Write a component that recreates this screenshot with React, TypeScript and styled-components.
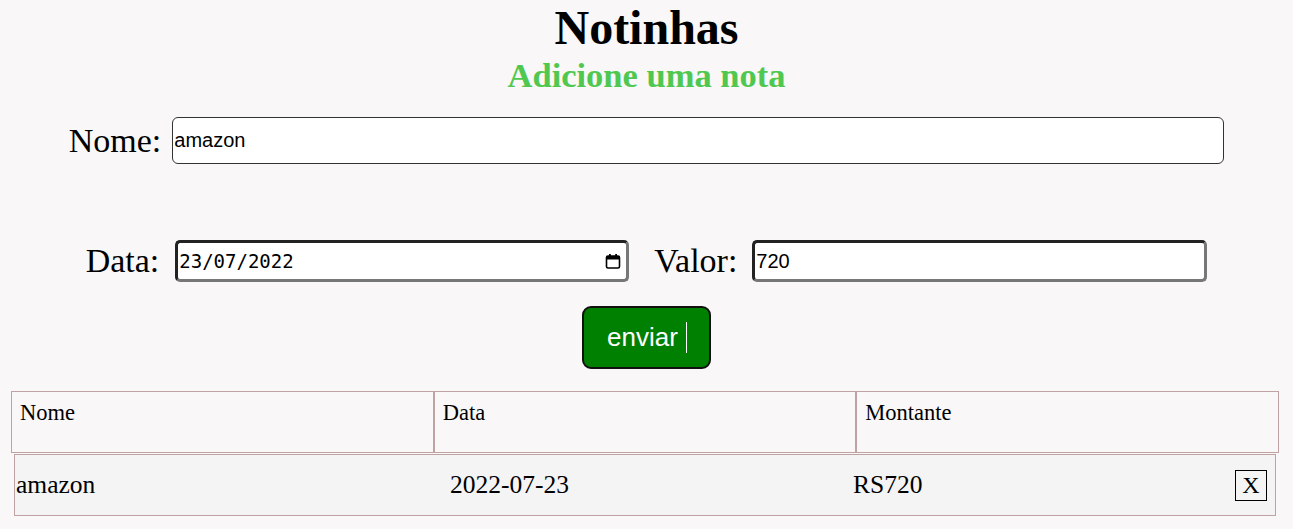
import React from 'react'
import styled, { createGlobalStyle } from 'styled-components'

const GlobalStyle = createGlobalStyle`
  body {
    margin: 0;
    background-color: #f9f7f8;
    font-family: "Liberation Serif", "Times New Roman", serif;
    color: #000;
  }
`

const Page = styled.div`
  display: flex;
  flex-direction: column;
  padding-top: 4px;
`

const Title = styled.h1`
  margin: 0;
  font-size: 48px;
  line-height: 48px;
  font-weight: bold;
  text-align: center;
`

const Subtitle = styled.h2`
  margin: 3px 0 0;
  font-size: 34.5px;
  line-height: 40px;
  font-weight: bold;
  text-align: center;
  color: #50c850;
`

const Form = styled.form`
  display: flex;
  flex-direction: column;
  align-items: center;
  margin-top: 22px;
`

const FieldRow = styled.div<{ top?: number }>`
  display: flex;
  align-items: center;
  justify-content: center;
  margin-top: ${(props) => props.top || 0}px;
`

const Label = styled.label<{ space: number; lead?: number }>`
  font-size: 34px;
  margin-left: ${(props) => props.lead || 0}px;
  margin-right: ${(props) => props.space}px;
`

const NameInput = styled.input`
  box-sizing: border-box;
  width: 1052px;
  height: 47px;
  padding: 0 1px;
  border: 1px solid #333;
  border-radius: 6px;
  background: #fff;
  font-family: "Liberation Sans", Arial, sans-serif;
  font-size: 20px;
  color: #000;
  outline: none;
`

const InsetBox = styled.div<{ width: number }>`
  box-sizing: border-box;
  display: flex;
  align-items: center;
  width: ${(props) => props.width}px;
  height: 42px;
  padding: 0 4px 0 1px;
  border: 3px solid;
  border-color: #222 #777 #777 #222;
  border-radius: 5px;
  background: #fff;
`

const InsetInput = styled.input<{ mono?: boolean }>`
  flex: 1;
  min-width: 0;
  border: none;
  outline: none;
  background: transparent;
  padding: 0;
  color: #000;
  font-family: ${(props) => props.mono ? '"DejaVu Sans Mono", monospace' : '"Liberation Sans", Arial, sans-serif'};
  font-size: ${(props) => props.mono ? 19 : 20}px;
`

const Calendar = styled.svg`
  width: 18px;
  height: 18px;
  flex-shrink: 0;
`

const SubmitButton = styled.button`
  display: flex;
  align-items: center;
  gap: 8px;
  box-sizing: border-box;
  height: 63px;
  margin-top: 24px;
  padding: 0 22px 0 23px;
  border: 2px solid #111;
  border-radius: 9px;
  background-color: #008000;
  color: #fff;
  font-family: "Liberation Sans", Arial, sans-serif;
  font-size: 26px;
`

const Caret = styled.span`
  width: 1px;
  height: 31px;
  background: #fff;
`

const Table = styled.div`
  display: flex;
  flex-direction: column;
  margin-top: 22px;
`

const HeaderRow = styled.div`
  display: grid;
  grid-template-columns: repeat(3, 1fr);
  width: 1268px;
  margin-left: 11px;
`

const HeaderCell = styled.div`
  box-sizing: border-box;
  height: 62px;
  padding: 8px 8px 0;
  border: 1px solid #bfa3a3;
  font-size: 22.5px;
`

const NoteRow = styled.div`
  box-sizing: border-box;
  display: grid;
  grid-template-columns: 434px 403px 1fr auto;
  align-items: center;
  width: 1262px;
  height: 62px;
  margin: 1px 0 0 14px;
  padding: 0 8px 0 1px;
  border: 1px solid #bfa3a3;
  background-color: #f4f4f4;
  font-size: 25.5px;
`

const DeleteButton = styled.button`
  box-sizing: border-box;
  width: 32px;
  height: 31px;
  padding: 0;
  border: 1px solid #000;
  background: transparent;
  font-family: "Liberation Serif", "Times New Roman", serif;
  font-size: 24px;
  line-height: 1;
  color: #000;
`

const CalendarIcon = () => (
  <Calendar viewBox="0 0 18 18">
    <rect x="2.5" y="4" width="13" height="12" rx="1.5" fill="none" stroke="#000" strokeWidth="1.6" />
    <rect x="2.5" y="4" width="13" height="3.5" fill="#000" />
    <rect x="5" y="2" width="1.8" height="3" fill="#000" />
    <rect x="11.2" y="2" width="1.8" height="3" fill="#000" />
  </Calendar>
)

export default function App() {
  return (
    <Page>
      <GlobalStyle />
      <Title>Notinhas</Title>
      <Subtitle>Adicione uma nota</Subtitle>
      <Form onSubmit={(e) => e.preventDefault()}>
        <FieldRow>
          <Label space={11}>Nome:</Label>
          <NameInput defaultValue="amazon" />
        </FieldRow>
        <FieldRow top={76}>
          <Label space={16}>Data:</Label>
          <InsetBox width={454}>
            <InsetInput mono defaultValue="23/07/2022" />
            <CalendarIcon />
          </InsetBox>
          <Label space={15} lead={25}>Valor:</Label>
          <InsetBox width={455}>
            <InsetInput defaultValue="720" />
          </InsetBox>
        </FieldRow>
        <SubmitButton type="submit">
          enviar
          <Caret />
        </SubmitButton>
      </Form>
      <Table>
        <HeaderRow>
          <HeaderCell>Nome</HeaderCell>
          <HeaderCell>Data</HeaderCell>
          <HeaderCell>Montante</HeaderCell>
        </HeaderRow>
        <NoteRow>
          <span>amazon</span>
          <span>2022-07-23</span>
          <span>RS720</span>
          <DeleteButton>X</DeleteButton>
        </NoteRow>
      </Table>
    </Page>
  )
}
